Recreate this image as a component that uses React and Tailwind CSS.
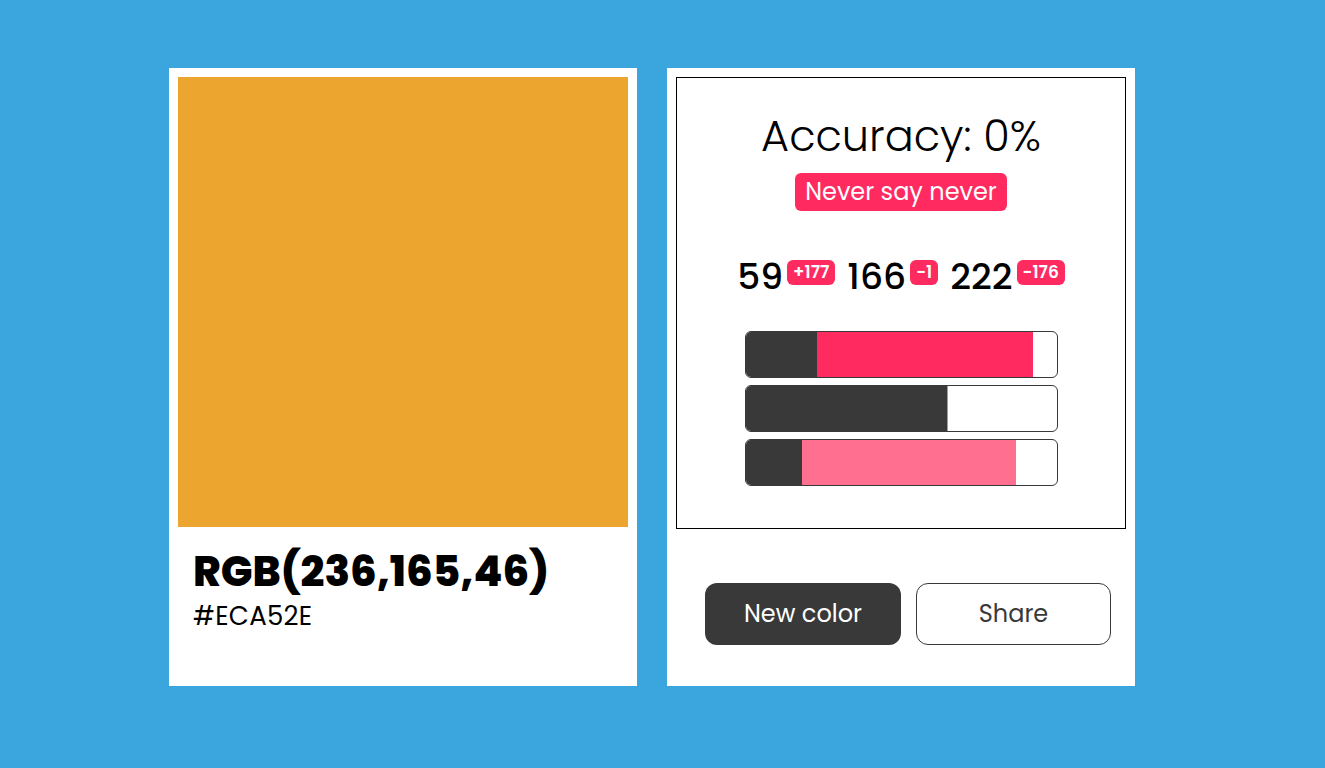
import { useState } from 'react';

const TARGET = [236, 165, 46];
const GUESS = [59, 166, 222];

const Bar = ({ guess, target }) => {
  const lo = Math.min(guess, target);
  const diff = Math.abs(target - guess);
  // over-shot guesses get the lighter pink
  const over = guess > target;
  return (
    <div className="flex h-[47px] w-full overflow-hidden rounded-[6px] border border-[#393939] bg-white">
      <div className="h-full bg-[#393939]" style={{ width: `${(lo / 255) * 100}%` }} />
      <div
        className={over ? 'h-full bg-[#ff6f8f]' : 'h-full bg-[#ff2a5f]'}
        style={{ width: `${(diff / 255) * 100}%`, minWidth: diff > 0 ? 1 : 0 }}
      />
    </div>
  );
};

const Delta = ({ value }) => (
  <span className="ml-[4px] mt-[5px] self-start rounded-[6px] bg-[#ff2a5f] px-[6px] text-[17px] font-semibold leading-[25px] text-white">
    {value > 0 ? `+${value}` : `${value}`}
  </span>
);

export default function App() {
  const [guess] = useState(GUESS);

  return (
    <div
      className="flex min-h-[768px] w-full gap-[30px] bg-[#3ba5dd] pl-[169px] pt-[68px]"
      style={{ fontFamily: 'Poppins, Inter, "Noto Sans", sans-serif' }}
    >
      {/* Colour card */}
      <div className="flex h-[618px] w-[468px] flex-col bg-white p-[9px]">
        <div className="h-[450px] w-[450px] bg-[#eca52e]" />
        <div className="px-[15px] pt-[20px]">
          <div className="text-[42px] font-extrabold leading-[50px] text-black">RGB(236,165,46)</div>
          <div className="mt-[4px] text-[26px] font-normal leading-[30px] tracking-[0.3px] text-black">#ECA52E</div>
        </div>
      </div>

      {/* Result card */}
      <div className="flex h-[618px] w-[468px] flex-col bg-white p-[9px]">
        <div className="flex h-[452px] flex-col items-center border border-black pt-[29px]">
          <div className="text-[43px] font-light leading-[58px] text-black">Accuracy: 0%</div>
          <div className="mt-[8px] rounded-[6px] bg-[#ff2a5f] px-[10px] text-[24px] font-normal leading-[38px] text-white">
            Never say never
          </div>
          <div className="mt-[44px] flex items-end gap-[12px] text-[36px] font-medium leading-[44px] text-black">
            {guess.map((g, i) => (
              <div key={i} className="flex">
                <span>{g}</span>
                <Delta value={TARGET[i] - g} />
              </div>
            ))}
          </div>
          <div className="mt-[32px] flex w-[313px] flex-col gap-[7px]">
            {guess.map((g, i) => (
              <Bar key={i} guess={g} target={TARGET[i]} />
            ))}
          </div>
        </div>
        <div className="mt-[54px] flex gap-[15px] pl-[29px]">
          <button className="h-[62px] w-[196px] rounded-[12px] bg-[#393939] text-[24px] text-white">New color</button>
          <button className="h-[62px] w-[195px] rounded-[12px] border border-[#393939] bg-white text-[24px] text-[#393939]">Share</button>
        </div>
      </div>
    </div>
  );
}
